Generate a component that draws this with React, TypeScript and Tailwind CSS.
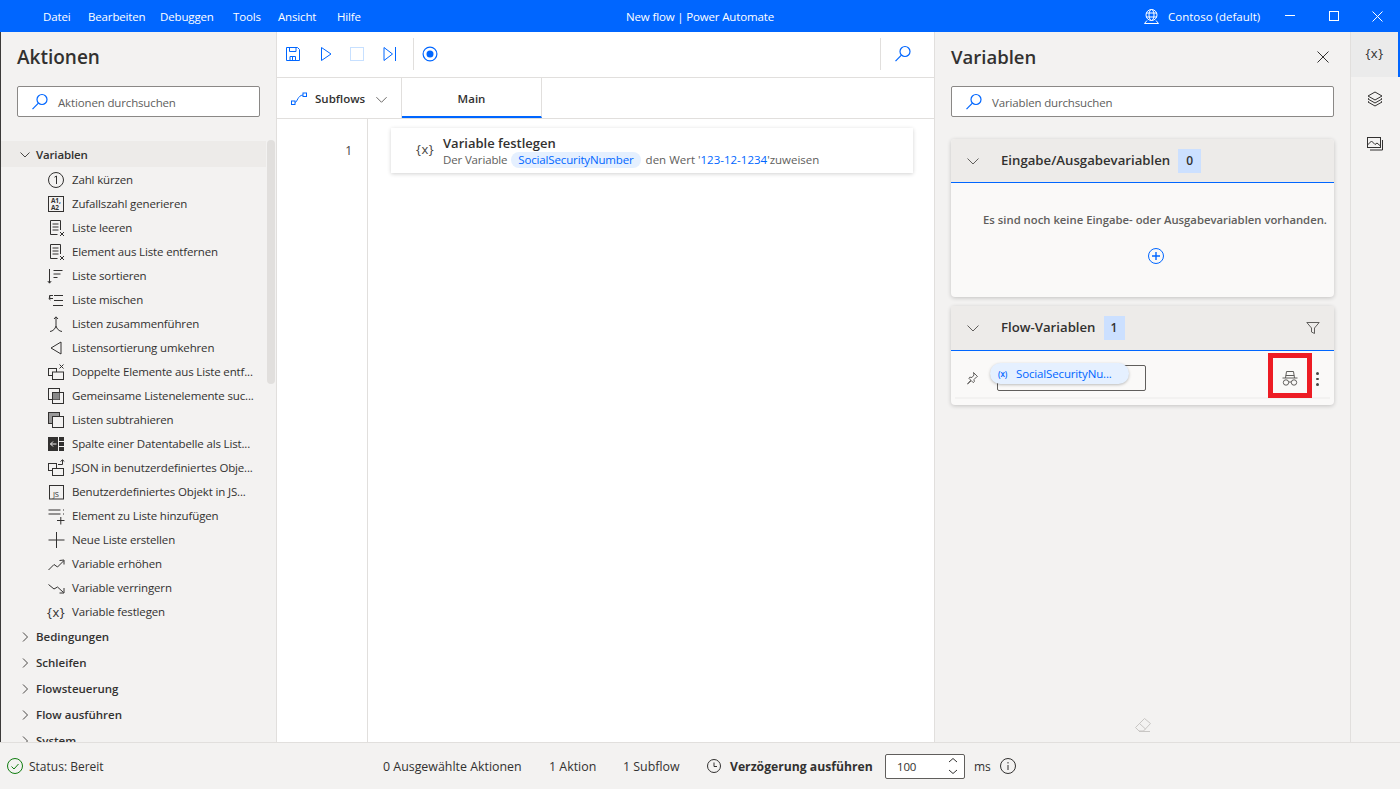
import React from "react";

const T = "text-[11.5px] tracking-[-0.15px]";

const S = ({ children, w = 20, h = 20, c = "#323130", sw = 1, className = "" }: any) => (
  <svg width={w} height={h} viewBox={`0 0 ${w} ${h}`} fill="none" stroke={c} strokeWidth={sw} className={`shrink-0 ${className}`}>
    {children}
  </svg>
);

const Search = () => (
  <S w={18} h={18} c="#0066ff" sw={1.2}>
    <circle cx="11" cy="6.5" r="5" />
    <path d="M7.4 10.2 1.5 16.2" />
  </S>
);

const BraceX = ({ c = "#323130" }: any) => (
  <span className="text-[13px] leading-none tracking-[0.5px]" style={{ color: c }}>{"{x}"}</span>
);

const icons: Record<string, React.ReactNode> = {
  one: (
    <S>
      <circle cx="9" cy="10" r="7.5" />
      <path d="M7.5 7.2 9.5 6v8" />
    </S>
  ),
  az: (
    <S>
      <rect x="1.5" y="2.5" width="15" height="15" />
      <text x="4" y="9" fontSize="6.5" fill="#323130" stroke="none" fontWeight="700">A1,</text>
      <text x="4" y="15.5" fontSize="6.5" fill="#323130" stroke="none" fontWeight="700">A2</text>
    </S>
  ),
  clear: (
    <S>
      <path d="M13.5 12V2.5h-10v14h7" />
      <path d="M5.5 6h6M5.5 9h6M5.5 12h6" />
      <path d="m13 14 4 4m0-4-4 4" />
    </S>
  ),
  sort: (
    <S>
      <path d="M2.5 3v14M.8 15l1.7 2.2L4.2 15" />
      <path d="M6.5 4.5h9M6.5 8h7M6.5 11.5h4" />
    </S>
  ),
  shuffle: (
    <S>
      <path d="M6 5.5H2.5v3H6M3.5 10 1.8 8.5 3.5 7" />
      <path d="M7 5.5h9M7 10.5h9M6 15.5h10" />
    </S>
  ),
  merge: (
    <S>
      <path d="M9 12V3M7 5l2-2.2L11 5" />
      <path d="M3 17.5c3-.3 5.2-2.7 6-5.5.8 2.8 3 5.2 6 5.5" />
    </S>
  ),
  rev: (
    <S>
      <path d="M14 4v12L4 10z" />
    </S>
  ),
  dup: (
    <S>
      <rect x="1.5" y="6.5" width="8" height="7" />
      <rect x="5.5" y="10" width="11" height="7.5" fill="#f3f2f1" />
      <path d="m12.5 2.5 4 4m0-4-4 4" />
    </S>
  ),
  common: (
    <S>
      <rect x="1.5" y="2.5" width="11" height="11" />
      <rect x="5.5" y="6.5" width="11" height="11" />
      <rect x="6" y="7" width="6.5" height="6.5" fill="#888" stroke="none" />
    </S>
  ),
  sub: (
    <S>
      <rect x="1.5" y="2.5" width="11" height="11" fill="#999" />
      <rect x="5.5" y="6.5" width="11" height="11" fill="#f3f2f1" />
    </S>
  ),
  col: (
    <S>
      <rect x="1" y="3" width="16" height="14" fill="#323130" stroke="none" />
      <path d="M11.5 3v14M11.5 7.5H17M11.5 12.5H17" stroke="#f3f2f1" />
      <path d="M9.5 10H3.5M6 7.5 3.5 10 6 12.5" stroke="#f3f2f1" />
    </S>
  ),
  json: (
    <S>
      <rect x="1.5" y="5.5" width="8" height="7" />
      <rect x="5.5" y="10.5" width="11" height="7" fill="#f3f2f1" />
      <path d="M11 6.5h4.5V2M13.5 3.5 15.5 1.8 17.3 3.5" />
    </S>
  ),
  js: (
    <S>
      <rect x="2.5" y="3.5" width="14" height="13.5" />
      <text x="6" y="15" fontSize="7.5" fill="#323130" stroke="none">JS</text>
    </S>
  ),
  add: (
    <S>
      <path d="M1.5 4h12M1.5 8h12M16 4h1M16 8h1" />
      <path d="M10 14.5h7.5M13.8 11v7.5" />
    </S>
  ),
  plus: (
    <S>
      <path d="M1.5 10h16M9.5 2v16" />
    </S>
  ),
  up: (
    <S>
      <path d="M1.5 16 7 10.5l3.5 2.5L16.5 7M12.5 6.5l4.5-.5v4.5" />
    </S>
  ),
  down: (
    <S>
      <path d="M1.5 6.5 7 11l3.5-2 6 5.5M17 10v5h-4.5" />
    </S>
  ),
  x: <BraceX />,
};

const items: [string, string][] = [
  ["one", "Zahl kürzen"],
  ["az", "Zufallszahl generieren"],
  ["clear", "Liste leeren"],
  ["clear", "Element aus Liste entfernen"],
  ["sort", "Liste sortieren"],
  ["shuffle", "Liste mischen"],
  ["merge", "Listen zusammenführen"],
  ["rev", "Listensortierung umkehren"],
  ["dup", "Doppelte Elemente aus Liste entf..."],
  ["common", "Gemeinsame Listenelemente suc..."],
  ["sub", "Listen subtrahieren"],
  ["col", "Spalte einer Datentabelle als List..."],
  ["json", "JSON in benutzerdefiniertes Obje..."],
  ["js", "Benutzerdefiniertes Objekt in JS..."],
  ["add", "Element zu Liste hinzufügen"],
  ["plus", "Neue Liste erstellen"],
  ["up", "Variable erhöhen"],
  ["down", "Variable verringern"],
  ["x", "Variable festlegen"],
];

const groups = ["Bedingungen", "Schleifen", "Flowsteuerung", "Flow ausführen", "System"];

const Chevron = ({ w = 14 }: any) => (
  <svg width={w} height={w} viewBox="0 0 14 14" fill="none" stroke="#605e5c" className="shrink-0">
    <path d="M1.5 4.5 7 10l5.5-5.5" />
  </svg>
);

const ChevronR = () => (
  <svg width="8" height="10" viewBox="0 0 8 10" fill="none" stroke="#484644" className="shrink-0">
    <path d="m2 .5 4.5 4.5L2 9.5" />
  </svg>
);

const SearchBox = ({ text }: { text: string }) => (
  <div className="flex h-[31px] items-center rounded-[2px] border border-[#8a8886] bg-white pl-[13px]">
    <Search />
    <span className={`ml-[9px] pt-[2px] ${T} text-[#605e5c]`}>{text}</span>
  </div>
);

const PanelHeader = ({ title, n, h, bw, children }: any) => (
  <div className={`flex items-center border-b border-[#0066ff] bg-[#edebe9] pl-[15px] pr-[15px] ${h}`}>
    <Chevron w={14} />
    <span className="ml-[21px] text-[13.2px] font-semibold text-[#323130]">{title}</span>
    <span className={`ml-[8px] flex h-[24px] items-center justify-center bg-[#cce0ff] text-[12px] font-semibold text-[#323130] ${bw}`}>{n}</span>
    <span className="flex-1" />
    {children}
  </div>
);

export default function App() {
  return (
    <div className="flex h-[789px] w-[1400px] flex-col overflow-hidden bg-[#f3f2f1] font-['Open_Sans','Noto_Sans',sans-serif] text-[#323130]">
      {/* Title bar */}
      <header className={`relative flex h-[32px] shrink-0 items-center bg-[#0066ff] pl-[43px] ${T} text-white`}>
        <nav className="flex pt-[2px]">
          <span className="w-[45px]">Datei</span>
          <span className="w-[72px]">Bearbeiten</span>
          <span className="w-[73px]">Debuggen</span>
          <span className="w-[45px]">Tools</span>
          <span className="w-[59px]">Ansicht</span>
          <span>Hilfe</span>
        </nav>
        <span className="absolute left-0 right-0 pt-[2px] text-center">New flow | Power Automate</span>
        <div className="ml-auto flex items-center">
          <svg width="17" height="17" viewBox="0 0 17 17" fill="none" stroke="#fff">
            <circle cx="8.5" cy="7" r="5.5" />
            <ellipse cx="8.5" cy="7" rx="2.5" ry="5.5" />
            <path d="M3 5h11M3 9h11M4 12.5l-2.5 3h14l-2.5-3" />
          </svg>
          <span className="ml-[8px] w-[109px] pt-[2px] tracking-normal">Contoso (default)</span>
          <svg width="10" height="2" className="ml-[8px]" stroke="#fff"><path d="M0 .5h10" /></svg>
          <svg width="10" height="10" className="ml-[34px]" fill="none" stroke="#fff"><rect x=".5" y=".5" width="9" height="9" /></svg>
          <svg width="11" height="11" className="ml-[33px] mr-[17px]" stroke="#fff"><path d="m.5.5 10 10m0-10-10 10" /></svg>
        </div>
      </header>

      <div className="flex min-h-0 flex-1 border-l border-[#3b3a39]">
        {/* Left panel */}
        <aside className="relative flex w-[276px] shrink-0 flex-col overflow-hidden border-r border-[#e1dfdd] bg-[#f3f2f1]">
          <h1 className="mt-[11px] pl-[16px] text-[19px] font-semibold leading-[28px]">Aktionen</h1>
          <div className="ml-[16px] mt-[15px] w-[243px]">
            <SearchBox text="Aktionen durchsuchen" />
          </div>
          <div className="mt-[24px] pr-[10px]">
            <div className={`flex h-[26px] items-center bg-[#edebe9] pl-[19px] pt-[2px] ${T} font-semibold`}>
              <svg width="10" height="8" viewBox="0 0 10 8" fill="none" stroke="#484644"><path d="m.5 1.5 4.5 4.5 4.5-4.5" /></svg>
              <span className="ml-[6px]">Variablen</span>
            </div>
            <div className="h-[1px]" />
            {items.map(([ic, t]) => (
              <div key={t} className={`flex h-[24px] items-center whitespace-nowrap pl-[46px] ${T}`}>
                <span className="flex w-[25px] shrink-0 items-center">{icons[ic]}</span>
                <span>{t}</span>
              </div>
            ))}
            {groups.map((g) => (
              <div key={g} className="flex h-[26px] items-center pl-[20px] text-[11.5px] font-semibold">
                <ChevronR />
                <span className="ml-[7px]">{g}</span>
              </div>
            ))}
          </div>
          <div className="absolute right-[1px] top-[108px] h-[244px] w-[8px] rounded-[4px] bg-[#e1dfdd]" />
        </aside>

        {/* Main */}
        <main className="flex min-w-0 flex-1 flex-col border-r border-[#e1dfdd] bg-white">
          <div className="flex h-[46px] shrink-0 items-center border-b border-[#e1dfdd] pb-[2px] pl-[7px]">
            <S c="#0066ff" w={16} h={16} className="ml-[1px]">
              <path d="M1.5 1.5h11l2 2v11h-13z" />
              <path d="M4.5 1.5v4H11v-4M5 14.5v-4h5.5v4M7.5 11v3.5" />
            </S>
            <S c="#0066ff" w={12} h={16} className="ml-[19px]">
              <path d="M1.5 1.5 11 8l-9.5 6.5z" />
            </S>
            <S c="#c7e0ff" w={14} h={14} className="ml-[18px]">
              <rect x=".5" y=".5" width="13" height="13" />
            </S>
            <S c="#0066ff" w={14} h={16} className="ml-[19px]">
              <path d="M1 1.5 9.5 8 1 14.5zM12.5 1v14" />
            </S>
            <div className="ml-[16px] h-[32px] w-px bg-[#e1dfdd]" />
            <S c="#0066ff" w={16} h={16} className="ml-[8px]" sw={1.2}>
              <circle cx="8" cy="8" r="6.9" />
              <circle cx="8" cy="8" r="3.5" fill="#0066ff" stroke="none" />
            </S>
            <span className="flex-1" />
            <div className="flex h-[32px] items-center border-l border-[#e1dfdd] pl-[13px] pr-[22px]">
              <Search />
            </div>
          </div>
          <div className="flex h-[41px] shrink-0 border-b border-[#e1dfdd]">
            <div className="flex w-[125px] items-center border-r border-[#e1dfdd] pl-[14px]">
              <S c="#0066ff" w={16} h={14} className="mt-[2px]">
                <rect x=".5" y="9" width="3.5" height="3.5" />
                <rect x="12" y="1" width="3.5" height="3.5" />
                <path d="M4 10.5c2.5-.5 2.5-7 8-7.5" />
              </S>
              <span className="ml-[8px] pt-[2px] text-[11.5px] font-semibold">Subflows</span>
              <span className="ml-[10px] mt-[2px]"><Chevron w={13} /></span>
            </div>
            <div className="flex w-[140px] items-center justify-center border-b-2 border-r border-b-[#0066ff] border-r-[#e1dfdd] pt-[3px] text-[11.5px] font-semibold">
              Main
            </div>
          </div>
          <div className="flex min-h-0 flex-1">
            <div className="w-[91px] shrink-0 border-r border-[#e1dfdd] pr-[15px] pt-[24px] text-right text-[12px] leading-[16px] text-[#484644]">1</div>
            <div className="pl-[23px] pt-[9px]">
              <div className="flex h-[45px] w-[522px] items-center bg-white pl-[25px] pt-[2px] shadow-[0_1px_4px_rgba(0,0,0,0.18)]">
                <span className="mb-[7px] w-[27px]"><BraceX c="#484644" /></span>
                <div>
                  <div className="text-[13px] font-semibold leading-[16px] text-[#323130]">Variable festlegen</div>
                  <div className={`mt-[1px] flex items-center ${T} leading-[16px] text-[#605e5c]`}>
                    <span>Der Variable</span>
                    <span className="ml-[4px] rounded-[8px] bg-[#e5f0ff] px-[7px] text-[#0066ff]">SocialSecurityNumber</span>
                    <span className="ml-[5px] tracking-normal">den Wert '</span>
                    <span className="tracking-normal text-[#0066ff]">123-12-1234</span>
                    <span className="tracking-normal">'zuweisen</span>
                  </div>
                </div>
              </div>
            </div>
          </div>
        </main>

        {/* Right panel */}
        <section className="relative flex w-[415px] shrink-0 flex-col bg-[#f3f2f1] px-[16px]">
          <div className="mt-[11px] flex h-[28px] items-center justify-between pr-[5px]">
            <h2 className="text-[18.5px] font-semibold">Variablen</h2>
            <svg width="12" height="12" stroke="#323130"><path d="m.5.5 11 11m0-11-11 11" /></svg>
          </div>
          <div className="mt-[15px]">
            <SearchBox text="Variablen durchsuchen" />
          </div>
          <div className="mt-[22px] overflow-hidden rounded-[4px] bg-[#faf9f8] shadow-[0_1px_4px_rgba(0,0,0,0.2)]">
            <PanelHeader title="Eingabe/Ausgabevariablen" n="0" h="h-[44px]" bw="w-[23px]" />
            <div className="flex h-[114px] flex-col items-center pt-[29px]">
              <span className="ml-[25px] whitespace-nowrap text-[11.3px] font-semibold text-[#605e5c]">Es sind noch keine Eingabe- oder Ausgabevariablen vorhanden.</span>
              <svg width="16" height="16" viewBox="0 0 16 16" fill="none" stroke="#0066ff" className="ml-[26px] mt-[19px]">
                <circle cx="8" cy="8" r="7.5" />
                <path d="M4 8h8M8 4v8" strokeWidth="1.4" />
              </svg>
            </div>
          </div>
          <div className="mt-[9px] rounded-[4px] bg-[#faf9f8] shadow-[0_1px_4px_rgba(0,0,0,0.2)]">
            <PanelHeader title="Flow-Variablen" n="1" h="h-[45px]" bw="w-[21px]">
              <svg width="14" height="14" viewBox="0 0 14 14" fill="none" stroke="#605e5c" className="-mr-px">
                <path d="M.8 1.5h12.4L8.5 7v5.5l-3-1.500V7z" />
              </svg>
            </PanelHeader>
            <div className="relative mx-[4px] flex h-[48px] items-center border-b-2 border-[#f3f2f1] pl-[10px] pt-[7px]">
              <svg width="14" height="14" viewBox="0 0 14 14" fill="none" stroke="#605e5c">
                <path d="m8.500 1.500 4 4-1 .5-2.500 2.500.3 2.200-1 1-2-2-3.800 3.300 3.300-3.800-2-2 1-1 2.200.3L9 4z" />
              </svg>
              <div className="ml-[18px] h-[26px] w-[149px] rounded-[2px] border border-[#605e5c]" />
              <div className={`absolute left-[35px] top-[12px] flex h-[21px] w-[139px] items-center rounded-[11px] bg-[#e5f0ff] pl-[8px] ${T} text-[#0066ff] shadow-[0_1px_3px_rgba(0,0,0,0.25)]`}>
                <span className="text-[8px] font-semibold">{"(x)"}</span>
                <span className="ml-[9px] whitespace-nowrap">SocialSecurityNu...</span>
              </div>
              <div className="absolute left-[313px] top-[2px] flex h-[45px] w-[44px] items-center justify-center border-[5px] border-[#ed1c24] pt-[5px]">
                <svg width="16" height="16" viewBox="0 0 16 16" fill="none" stroke="#605e5c">
                  <path d="M.5 8h15M3.5 8l1-6.500h7l1 6.500" />
                  <path d="M3.8 5.500h8.400" />
                  <circle cx="4" cy="12.500" r="2.700" />
                  <circle cx="12" cy="12.500" r="2.700" />
                  <path d="M6.700 12h2.600" />
                </svg>
              </div>
              <div className="absolute left-[361px] top-[21px] flex flex-col gap-[3px]">
                <span className="block h-[2.5px] w-[2.5px] rounded-full bg-[#484644]" />
                <span className="block h-[2.5px] w-[2.5px] rounded-full bg-[#484644]" />
                <span className="block h-[2.5px] w-[2.5px] rounded-full bg-[#484644]" />
              </div>
            </div>
            <div className="h-[6px]" />
          </div>
          <svg width="18" height="16" viewBox="0 0 18 16" fill="none" stroke="#c8c6c4" className="absolute bottom-[9px] left-[199px]">
            <path d="m10.500 1.500 6 5-7 7.500H5L1.500 10.500zM5.500 6.500l6 5.500M5 14.500h11" />
          </svg>
        </section>

        {/* Rail */}
        <div className="flex w-[50px] shrink-0 flex-col border-l border-[#e1dfdd] bg-[#f3f2f1]">
          <div className="flex h-[45px] items-center justify-center border-r-2 border-[#0066ff] bg-[#ebebeb] pb-[3px]">
            <BraceX />
          </div>
          <div className="flex h-[44px] items-center justify-center pr-[2px]">
            <svg width="16" height="16" viewBox="0 0 16 16" fill="none" stroke="#323130">
              <path d="M8 1 15 5 8 9 1 5z" />
              <path d="M2 7.500 1 8l7 4 7-4-1-.5M2 10.500 1 11l7 4 7-4-1-.5" />
            </svg>
          </div>
          <div className="flex h-[46px] items-center justify-center pr-[2px]">
            <svg width="16" height="14" viewBox="0 0 16 14" fill="none" stroke="#323130">
              <rect x=".5" y=".5" width="13" height="10" />
              <path d="M.5 8 4.500 4 8 7.500 10 6l3.500 3M15.500 3v10H3" />
            </svg>
          </div>
        </div>
      </div>

      {/* Status bar */}
      <footer className="flex h-[47px] shrink-0 items-center whitespace-nowrap border-t border-[#e1dfdd] bg-[#f3f2f1] pl-[7px] text-[12px]">
        <svg width="16" height="16" viewBox="0 0 16 16" fill="none" stroke="#107c10">
          <circle cx="8" cy="8" r="7.5" />
          <path d="m4.500 8.500 2.500 2.500 4.500-5" />
        </svg>
        <span className="ml-[6px] w-[354px] pt-[2px]">Status: Bereit</span>
        <span className="w-[166px] pt-[2px] text-[12.4px]">0 Ausgewählte Aktionen</span>
        <span className="w-[74px] pt-[2px] text-[12.4px]">1 Aktion</span>
        <span className="w-[84px] pt-[2px] text-[12.4px]">1 Subflow</span>
        <svg width="14" height="14" viewBox="0 0 14 14" fill="none" stroke="#323130">
          <circle cx="7" cy="7" r="6.5" />
          <path d="M7 3.500V7.500h3" />
        </svg>
        <span className="ml-[9px] w-[155px] pt-[2px] text-[12.2px] font-bold">Verzögerung ausführen</span>
        <div className="flex h-[25px] w-[80px] items-center justify-between rounded-[2px] border border-[#605e5c] bg-white pl-[11px] pr-[5px]">
          <span className="pt-[2px] text-[11.5px] tracking-[-0.2px]">100</span>
          <svg width="12" height="18" viewBox="0 0 12 18" fill="none" stroke="#323130">
            <path d="m2 5 4-3.500L10 5M2 13l4 3.500 4-3.500" />
          </svg>
        </div>
        <span className="ml-[9px] pt-[2px]">ms</span>
        <svg width="16" height="16" viewBox="0 0 16 16" fill="none" stroke="#323130" className="ml-[9px]">
          <circle cx="8" cy="8" r="7.5" />
          <path d="M8 7v5M8 4v1.500" />
        </svg>
      </footer>
    </div>
  );
}
